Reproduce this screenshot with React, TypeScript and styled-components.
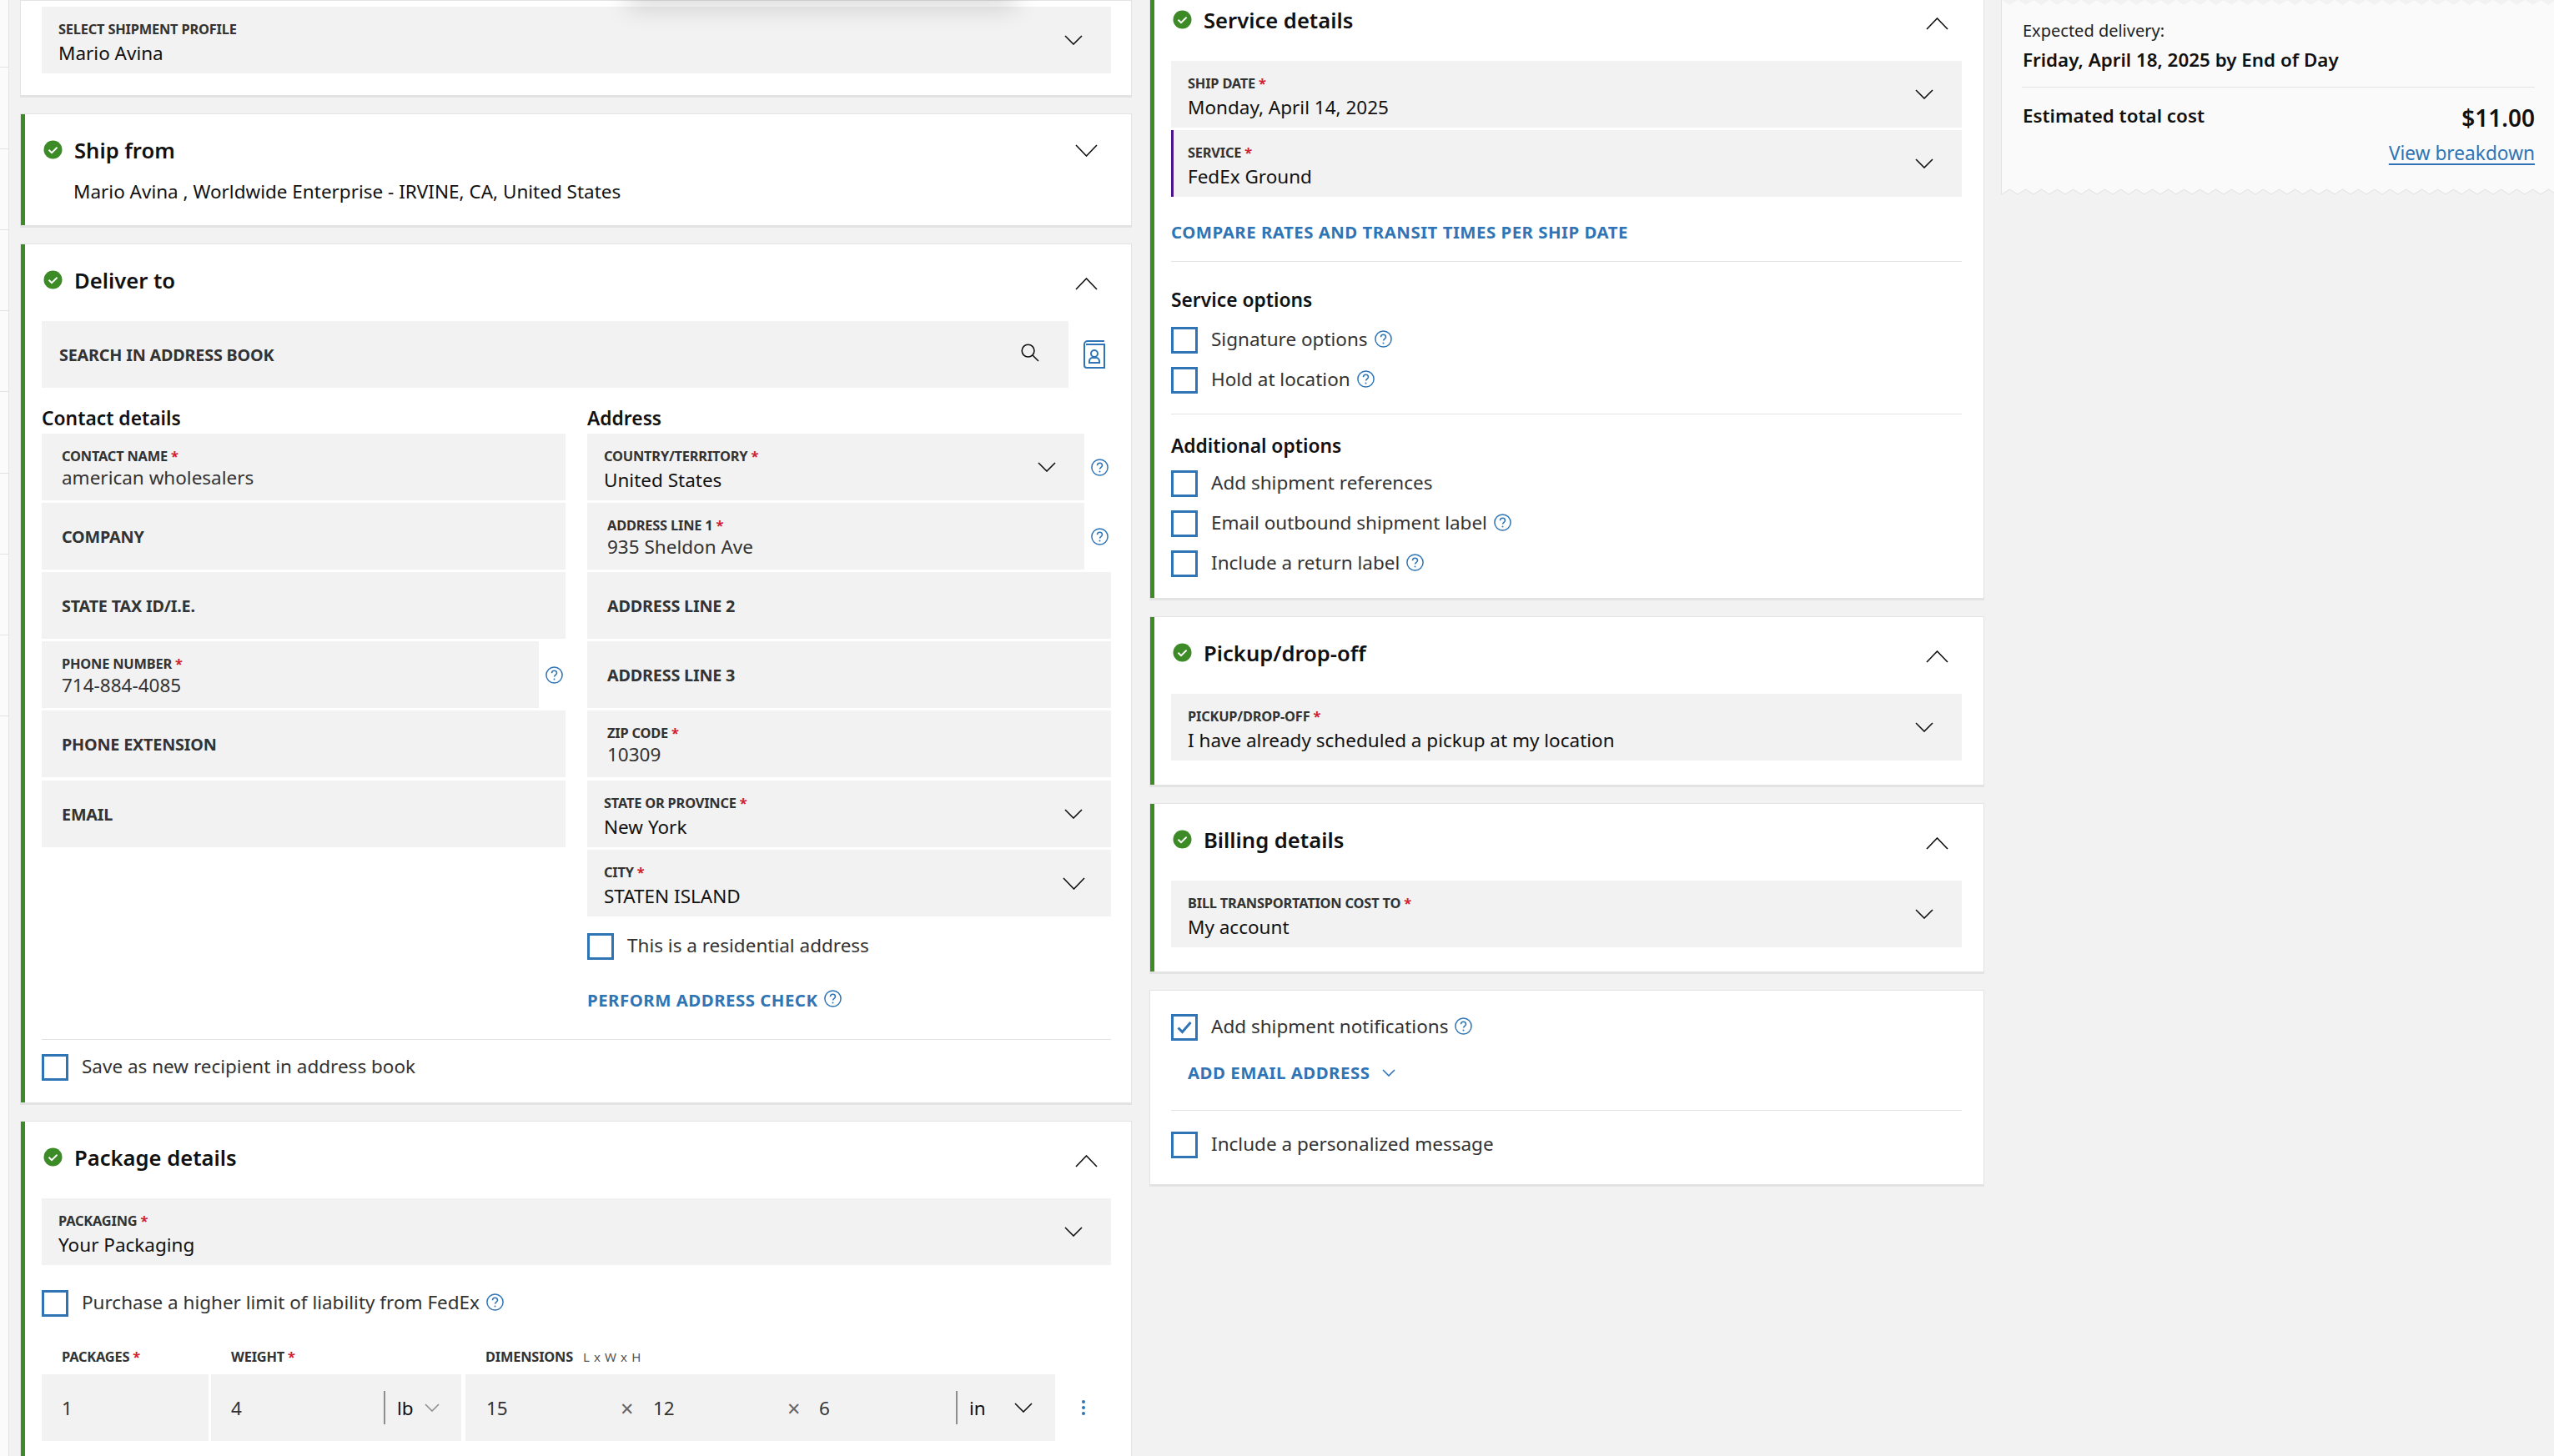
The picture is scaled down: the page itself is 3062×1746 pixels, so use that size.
import React from 'react';
import styled, { createGlobalStyle } from 'styled-components';

const GlobalStyle = createGlobalStyle`
  html, body {
    margin: 0;
    padding: 0;
    background: #f2f2f2;
  }
  * {
    box-sizing: border-box;
  }
`;

const BLUE = '#2f75b5';
const GREEN = '#3c8b27';
const FIELD = '#f2f2f2';
const LINE = '#e3e3e3';

const Page = styled.div`
  display: flex;
  position: relative;
  width: 3062px;
  height: 1746px;
  overflow: hidden;
  background: ${FIELD};
  font-family: 'Noto Sans', 'Open Sans', sans-serif;
  color: #333;
`;

const Sidebar = styled.div`
  flex: 0 0 11px;
  margin-right: 13px;
  margin-top: -16px;
  height: 1762px;
  background: #fbfbfb;
  border-right: 1px solid ${LINE};
`;

const SidebarRow = styled.div`
  height: 97.25px;
  border-bottom: 1px solid ${LINE};
`;

const Column = styled.div<{ $width: number; $top?: number; $gapRight?: number }>`
  flex: 0 0 ${(p) => p.$width}px;
  display: flex;
  flex-direction: column;
  gap: 19px;
  margin-top: ${(p) => p.$top ?? 0}px;
  margin-right: ${(p) => p.$gapRight ?? 0}px;
`;

const Card = styled.section<{ $done?: boolean; $pt?: number; $pb?: number; $pr?: number }>`
  background: #fff;
  border: 1px solid ${LINE};
  border-bottom-width: 3px;
  padding: ${(p) => p.$pt ?? 0}px ${(p) => p.$pr ?? 24}px ${(p) => p.$pb ?? 29}px 25px;
  box-shadow: ${(p) => (p.$done ? `inset 5px 0 0 ${GREEN}` : 'none')};
`;

const CardHeader = styled.header`
  display: flex;
  align-items: center;
  height: 40px;
  margin-top: 24px;
  margin-bottom: 28px;
`;

const TitleIcon = styled.svg`
  flex: none;
  width: 23px;
  height: 23px;
  margin-top: -4px;
  margin-right: 14px;
  margin-left: 2px;
`;

const Title = styled.h2`
  flex: 1;
  margin: 0;
  font-size: 25.6px;
  line-height: 40px;
  font-weight: 600;
  color: #111;
`;

const ToggleSlot = styled.div<{ $up?: boolean }>`
  display: flex;
  width: 27px;
  margin-right: 16px;
  margin-top: ${(p) => (p.$up ? 7 : -2)}px;
`;

const ChevronSvg = styled.svg<{ $up?: boolean }>`
  display: block;
  flex: none;
  transform: ${(p) => (p.$up ? 'rotate(180deg)' : 'none')};
`;

const Stack = styled.div<{ $offsetSix?: boolean }>`
  display: flex;
  flex-direction: column;
  gap: 3px;
  ${(p) => (p.$offsetSix ? '> :nth-child(6) { margin-top: 1px; }' : '')}
`;

const FieldBox = styled.div<{ $purple?: boolean; $pad?: number }>`
  flex: 1 0 auto;
  min-width: 0;
  height: 80px;
  display: flex;
  align-items: center;
  background: ${FIELD};
  padding: 0 ${(p) => p.$pad ?? 21}px;
  box-shadow: ${(p) => (p.$purple ? 'inset 3px 0 0 #4d148c' : 'none')};
`;

const FieldText = styled.div`
  flex: 1;
  min-width: 0;
  align-self: flex-start;
  padding-top: 17px;
`;

const FieldLabel = styled.div`
  font-size: 16.4px;
  line-height: 20px;
  font-weight: 700;
  color: #333;
  white-space: nowrap;
  letter-spacing: -0.2px;
`;

const Required = styled.span`
  color: #d0202e;
  margin-left: 4px;
`;

const FieldValue = styled.div<{ $select?: boolean }>`
  font-size: 22.5px;
  line-height: 30px;
  margin-top: ${(p) => (p.$select ? 4 : 1)}px;
  color: ${(p) => (p.$select ? '#111' : '#333')};
  white-space: nowrap;
`;

const EmptyLabel = styled.div`
  flex: 1;
  font-size: 19.8px;
  font-weight: 700;
  color: #333;
  letter-spacing: -0.2px;
`;

const ChevronSlot = styled.div<{ $right?: number }>`
  flex: none;
  margin-right: ${(p) => p.$right ?? 13}px;
`;

const HelpButton = styled.span`
  flex: none;
  display: inline-flex;
  color: ${BLUE};
`;

const FieldWithHelp = styled.div`
  display: flex;
  align-items: center;
  ${HelpButton} {
    margin-left: 8px;
    margin-right: 3px;
  }
`;

const SearchRow = styled.div`
  display: flex;
  align-items: center;
`;

const BookSlot = styled.div`
  flex: none;
  display: flex;
  width: 51px;
  justify-content: flex-end;
  padding-right: 7px;
`;

const Columns = styled.div`
  display: grid;
  grid-template-columns: 628px 628px;
  column-gap: 26px;
  margin-top: 21px;
`;

const SubHeading = styled.h3<{ $mt?: number; $mb?: number }>`
  margin: ${(p) => p.$mt ?? 0}px 0 ${(p) => p.$mb ?? 2}px;
  font-size: 22.8px;
  line-height: 32px;
  font-weight: 600;
  color: #111;
`;

const CheckRow = styled.label<{ $mt?: number }>`
  display: flex;
  align-items: center;
  height: 32px;
  margin-top: ${(p) => p.$mt ?? 0}px;
  font-size: 22.5px;
  color: #333;
`;

const CheckText = styled.span`
  margin-top: -3px;
`;

const CheckBox = styled.span`
  flex: none;
  display: flex;
  align-items: center;
  justify-content: center;
  width: 32px;
  height: 32px;
  margin-right: 16px;
  border: 3px solid ${BLUE};
  background: #fff;
`;

const InlineHelp = styled(HelpButton)`
  margin-left: 8px;
  margin-top: -4px;
`;

const LinkRow = styled.div<{ $mt?: number; $ml?: number }>`
  display: flex;
  align-items: center;
  height: 30px;
  margin-top: ${(p) => p.$mt ?? 0}px;
  margin-left: ${(p) => p.$ml ?? 0}px;
  color: ${BLUE};
`;

const LinkText = styled.a`
  font-size: 20.4px;
  font-weight: 700;
  color: ${BLUE};
  letter-spacing: 0.5px;
  text-decoration: none;
  white-space: nowrap;
`;

const LinkChevron = styled.span`
  display: inline-flex;
  margin-left: 15px;
`;

const Divider = styled.hr<{ $mt?: number }>`
  border: 0;
  height: 1px;
  margin: ${(p) => p.$mt ?? 0}px 0 0;
  background: ${LINE};
`;

const BodyText = styled.div`
  margin: -15px 0 0 38px;
  font-size: 22.5px;
  line-height: 32px;
  color: #111;
`;

const DimLabels = styled.div`
  display: flex;
  align-items: center;
  height: 30px;
  margin-top: 32px;
  margin-bottom: 7px;
`;

const DimLabel = styled.div<{ $w: number; $pl?: number }>`
  flex: 0 0 ${(p) => p.$w}px;
  padding-left: ${(p) => p.$pl ?? 0}px;
  font-size: 16.4px;
  font-weight: 700;
  color: #333;
  letter-spacing: -0.2px;
  white-space: nowrap;
`;

const DimHint = styled.span`
  margin-left: 12px;
  font-size: 15px;
  font-weight: 400;
  color: #555;
  letter-spacing: 0.6px;
`;

const MeasureRow = styled.div`
  display: flex;
  align-items: center;
`;

const MeasureCell = styled.div<{ $w: number; $ml?: number; $pl?: number; $pr?: number }>`
  flex: 0 0 ${(p) => p.$w}px;
  display: flex;
  align-items: center;
  height: 80px;
  margin-left: ${(p) => p.$ml ?? 0}px;
  padding-left: ${(p) => p.$pl ?? 24}px;
  padding-right: ${(p) => p.$pr ?? 0}px;
  background: ${FIELD};
  font-size: 22.5px;
  color: #333;
`;

const MeasureValue = styled.span<{ $w?: number }>`
  flex: ${(p) => (p.$w ? `0 0 ${p.$w}px` : '1')};
`;

const TimesMark = styled.span<{ $w: number }>`
  flex: 0 0 ${(p) => p.$w}px;
  font-size: 27px;
  line-height: 1;
  color: #666;
`;

const UnitSplit = styled.span`
  flex: none;
  width: 2px;
  height: 40px;
  margin-right: 14px;
  background: #8e8e8e;
`;

const UnitText = styled.span<{ $w: number }>`
  flex: 0 0 ${(p) => p.$w}px;
  color: #111;
`;

const Kebab = styled.div`
  flex: none;
  display: flex;
  flex-direction: column;
  gap: 3px;
  margin-left: 32px;
`;

const KebabDot = styled.span`
  width: 4px;
  height: 4px;
  border-radius: 50%;
  background: ${BLUE};
`;

const Summary = styled.aside`
  position: relative;
  flex: 1;
  height: 233px;
  padding: 24px 23px 0 25px;
  background: #fafafa;
  border-left: 1px solid ${LINE};
`;

const ZigZag = styled.svg<{ $bottom?: boolean }>`
  position: absolute;
  left: 0;
  display: block;
  width: 100%;
  height: 8px;
  ${(p) => (p.$bottom ? 'bottom: -1px;' : 'top: 0;')}
`;

const DeliveryLabel = styled.div`
  font-size: 20px;
  line-height: 26px;
  color: #222;
`;

const DeliveryDate = styled.div`
  margin-top: 6px;
  font-size: 22.4px;
  line-height: 32px;
  font-weight: 600;
  color: #111;
`;

const SummaryLine = styled.hr`
  border: 0;
  height: 1px;
  margin: 16px 0 0 -1px;
  background: ${LINE};
`;

const TotalRow = styled.div`
  display: flex;
  justify-content: space-between;
  align-items: flex-start;
  margin-top: 18px;
`;

const TotalLabel = styled.div`
  font-size: 22.4px;
  line-height: 32px;
  font-weight: 600;
  color: #111;
`;

const TotalPrice = styled.div`
  margin-top: -2px;
  margin-bottom: 2px;
  font-size: 28px;
  line-height: 40px;
  font-weight: 600;
  color: #111;
`;

const BreakdownRow = styled.div`
  display: flex;
  justify-content: flex-end;
  margin-top: 6px;
`;

const Breakdown = styled.a`
  font-size: 22.7px;
  line-height: 30px;
  color: ${BLUE};
  text-decoration: underline;
  text-underline-offset: 4px;
`;

const TopShadow = styled.div`
  position: absolute;
  top: -40px;
  left: 760px;
  width: 450px;
  height: 40px;
  box-shadow: 0 2px 30px 8px rgba(0, 0, 0, 0.14);
`;

const Chevron = ({
  w = 22,
  up,
  color = '#111',
}: {
  w?: number;
  up?: boolean;
  color?: string;
}) => {
  const h = Math.round(w * 0.55);
  return (
    <ChevronSvg $up={up} width={w} height={h} viewBox={`0 0 ${w} ${h}`} fill="none">
      <polyline
        points={`1,1 ${w / 2},${h - 1} ${w - 1},1`}
        stroke={color}
        strokeWidth="1.6"
      />
    </ChevronSvg>
  );
};

const Help = ({ size = 21 }: { size?: number }) => (
  <svg width={size} height={size} viewBox="0 0 21 21" fill="none" stroke="currentColor">
    <circle cx="10.5" cy="10.5" r="9.6" strokeWidth="1.5" />
    <path d="M7.5 8.2a3 3 0 0 1 6 0c0 2-3 2.2-3 4.4" strokeWidth="1.6" />
    <circle cx="10.5" cy="15.4" r="1" fill="currentColor" stroke="none" />
  </svg>
);

const Done = () => (
  <TitleIcon viewBox="0 0 23 23">
    <circle cx="11.5" cy="11.5" r="11" fill={GREEN} />
    <path d="M6.5 11.8l3.5 3.4 6.6-6.4" fill="none" stroke="#fff" strokeWidth="1.9" />
  </TitleIcon>
);

const SearchIcon = () => (
  <svg width="22" height="22" viewBox="0 0 22 22" fill="none" stroke="#111" strokeWidth="1.6">
    <circle cx="8.6" cy="8.6" r="7.4" />
    <path d="M14 14l7 7" />
  </svg>
);

const BookIcon = () => (
  <svg width="26" height="34" viewBox="0 0 26 34" fill="none" stroke={BLUE} strokeWidth="2">
    <path d="M25 1H5a4 4 0 0 0-4 4v25a3 3 0 0 0 3 3h21V5H3" />
    <circle cx="13" cy="16" r="4" />
    <path d="M7 27v-2a4 4 0 0 1 4-4h4a4 4 0 0 1 4 4v2z" />
  </svg>
);

const Tick = () => (
  <svg width="18" height="16" viewBox="0 0 18 16" fill="none" stroke={BLUE} strokeWidth="3">
    <path d="M1.5 8.5l5 5L16.5 2" />
  </svg>
);

const Edge = ({ id, bottom }: { id: string; bottom?: boolean }) => (
  <ZigZag $bottom={bottom}>
    <defs>
      <pattern id={id} patternUnits="userSpaceOnUse" width="19" height="8">
        {bottom ? (
          <>
            <path d="M0 7L9.5 1L19 7V8H0Z" fill="#f2f2f2" />
            <path d="M0 7L9.5 1L19 7" fill="none" stroke="#e0e0e0" />
          </>
        ) : (
          <path d="M0 0L9.5 6L19 0Z" fill="#f2f2f2" />
        )}
      </pattern>
    </defs>
    <rect width="100%" height="8" fill={`url(#${id})`} />
  </ZigZag>
);

const Label = ({ text, required = true }: { text: string; required?: boolean }) => (
  <FieldLabel>
    {text}
    {required && <Required>*</Required>}
  </FieldLabel>
);

const SelectField = ({
  label,
  value,
  required = true,
  purple,
  chevronW,
}: {
  label: string;
  value: string;
  required?: boolean;
  purple?: boolean;
  chevronW?: number;
}) => (
  <FieldBox $purple={purple} $pad={20}>
    <FieldText>
      <Label text={label} required={required} />
      <FieldValue $select>{value}</FieldValue>
    </FieldText>
    <ChevronSlot $right={chevronW ? 11 : 14}>
      <Chevron w={chevronW} />
    </ChevronSlot>
  </FieldBox>
);

const InputField = ({ label, value }: { label: string; value: string }) => (
  <FieldBox $pad={24}>
    <FieldText>
      <Label text={label} />
      <FieldValue>{value}</FieldValue>
    </FieldText>
  </FieldBox>
);

const EmptyField = ({ label }: { label: string }) => (
  <FieldBox $pad={24}>
    <EmptyLabel>{label}</EmptyLabel>
  </FieldBox>
);

const Check = ({
  label,
  help,
  checked,
  mt,
}: {
  label: string;
  help?: boolean;
  checked?: boolean;
  mt?: number;
}) => (
  <CheckRow $mt={mt}>
    <CheckBox>{checked && <Tick />}</CheckBox>
    <CheckText>{label}</CheckText>
    {help && (
      <InlineHelp>
        <Help />
      </InlineHelp>
    )}
  </CheckRow>
);

const SectionHeader = ({ title, open = true }: { title: string; open?: boolean }) => (
  <CardHeader>
    <Done />
    <Title>{title}</Title>
    <ToggleSlot $up={open}>
      <Chevron w={27} up={open} />
    </ToggleSlot>
  </CardHeader>
);

export default function App() {
  return (
    <Page>
      <GlobalStyle />
      <Sidebar>
        {Array.from({ length: 9 }, (_, i) => (
          <SidebarRow key={i} />
        ))}
      </Sidebar>

      <Column $width={1333} $gapRight={21}>
        <Card $pt={7} $pb={26}>
          <SelectField label="SELECT SHIPMENT PROFILE" value="Mario Avina" required={false} />
        </Card>

        <Card $done $pb={24}>
          <SectionHeader title="Ship from" open={false} />
          <BodyText>Mario Avina , Worldwide Enterprise - IRVINE, CA, United States</BodyText>
        </Card>

        <Card $done $pb={26}>
          <SectionHeader title="Deliver to" />
          <SearchRow>
            <FieldBox>
              <EmptyLabel>SEARCH IN ADDRESS BOOK</EmptyLabel>
              <ChevronSlot $right={14}>
                <SearchIcon />
              </ChevronSlot>
            </FieldBox>
            <BookSlot>
              <BookIcon />
            </BookSlot>
          </SearchRow>
          <Columns>
            <div>
              <SubHeading>Contact details</SubHeading>
              <Stack $offsetSix>
                <InputField label="CONTACT NAME" value="american wholesalers" />
                <EmptyField label="COMPANY" />
                <EmptyField label="STATE TAX ID/I.E." />
                <FieldWithHelp>
                  <InputField label="PHONE NUMBER" value="714-884-4085" />
                  <HelpButton>
                    <Help />
                  </HelpButton>
                </FieldWithHelp>
                <EmptyField label="PHONE EXTENSION" />
                <EmptyField label="EMAIL" />
              </Stack>
            </div>
            <div>
              <SubHeading>Address</SubHeading>
              <Stack $offsetSix>
                <FieldWithHelp>
                  <SelectField label="COUNTRY/TERRITORY" value="United States" />
                  <HelpButton>
                    <Help />
                  </HelpButton>
                </FieldWithHelp>
                <FieldWithHelp>
                  <InputField label="ADDRESS LINE 1" value="935 Sheldon Ave" />
                  <HelpButton>
                    <Help />
                  </HelpButton>
                </FieldWithHelp>
                <EmptyField label="ADDRESS LINE 2" />
                <EmptyField label="ADDRESS LINE 3" />
                <InputField label="ZIP CODE" value="10309" />
                <SelectField label="STATE OR PROVINCE" value="New York" />
                <SelectField label="CITY" value="STATEN ISLAND" chevronW={27} />
              </Stack>
              <Check label="This is a residential address" mt={20} />
              <LinkRow $mt={33}>
                <LinkText>PERFORM ADDRESS CHECK</LinkText>
                <InlineHelp>
                  <Help />
                </InlineHelp>
              </LinkRow>
            </div>
          </Columns>
          <Divider $mt={32} />
          <Check label="Save as new recipient in address book" mt={17} />
        </Card>

        <Card $done $pb={120}>
          <SectionHeader title="Package details" />
          <SelectField label="PACKAGING" value="Your Packaging" />
          <Check label="Purchase a higher limit of liability from FedEx" help mt={30} />
          <DimLabels>
            <DimLabel $w={203} $pl={24}>
              PACKAGES<Required>*</Required>
            </DimLabel>
            <DimLabel $w={305} $pl={24}>
              WEIGHT<Required>*</Required>
            </DimLabel>
            <DimLabel $w={400} $pl={24}>
              DIMENSIONS<DimHint>L x W x H</DimHint>
            </DimLabel>
          </DimLabels>
          <MeasureRow>
            <MeasureCell $w={200}>1</MeasureCell>
            <MeasureCell $w={300} $ml={3} $pr={26}>
              <MeasureValue>4</MeasureValue>
              <UnitSplit />
              <UnitText $w={33}>lb</UnitText>
              <Chevron w={18} color="#8e8e8e" />
            </MeasureCell>
            <MeasureCell $w={707} $ml={5} $pl={25}>
              <MeasureValue $w={161}>15</MeasureValue>
              <TimesMark $w={39}>×</TimesMark>
              <MeasureValue $w={161}>12</MeasureValue>
              <TimesMark $w={38}>×</TimesMark>
              <MeasureValue $w={164}>6</MeasureValue>
              <UnitSplit />
              <UnitText $w={54}>in</UnitText>
              <Chevron w={22} />
            </MeasureCell>
            <Kebab>
              <KebabDot />
              <KebabDot />
              <KebabDot />
            </Kebab>
          </MeasureRow>
        </Card>
      </Column>

      <Column $width={1001} $top={-20} $gapRight={20}>
        <Card $done $pb={25} $pr={26}>
          <SectionHeader title="Service details" />
          <Stack>
            <SelectField label="SHIP DATE" value="Monday, April 14, 2025" />
            <SelectField label="SERVICE" value="FedEx Ground" purple />
          </Stack>
          <LinkRow $mt={27}>
            <LinkText>COMPARE RATES AND TRANSIT TIMES PER SHIP DATE</LinkText>
          </LinkRow>
          <Divider $mt={20} />
          <SubHeading $mt={30} $mb={16}>
            Service options
          </SubHeading>
          <Check label="Signature options" help />
          <Check label="Hold at location" help mt={16} />
          <Divider $mt={24} />
          <SubHeading $mt={22} $mb={13}>
            Additional options
          </SubHeading>
          <Check label="Add shipment references" />
          <Check label="Email outbound shipment label" help mt={16} />
          <Check label="Include a return label" help mt={16} />
        </Card>

        <Card $done $pr={26}>
          <SectionHeader title="Pickup/drop-off" />
          <SelectField label="PICKUP/DROP-OFF" value="I have already scheduled a pickup at my location" />
        </Card>

        <Card $done $pr={26}>
          <SectionHeader title="Billing details" />
          <SelectField label="BILL TRANSPORTATION COST TO" value="My account" />
        </Card>

        <Card $pt={28} $pb={31} $pr={26}>
          <Check label="Add shipment notifications" help checked />
          <LinkRow $mt={23} $ml={20}>
            <LinkText>ADD EMAIL ADDRESS</LinkText>
            <LinkChevron>
              <Chevron w={16} color={BLUE} />
            </LinkChevron>
          </LinkRow>
          <Divider $mt={30} />
          <Check label="Include a personalized message" mt={25} />
        </Card>
      </Column>

      <Summary>
        <Edge id="summary-top" />
        <DeliveryLabel>Expected delivery:</DeliveryLabel>
        <DeliveryDate>Friday, April 18, 2025 by End of Day</DeliveryDate>
        <SummaryLine />
        <TotalRow>
          <TotalLabel>Estimated total cost</TotalLabel>
          <TotalPrice>$11.00</TotalPrice>
        </TotalRow>
        <BreakdownRow>
          <Breakdown>View breakdown</Breakdown>
        </BreakdownRow>
        <Edge id="summary-bottom" bottom />
      </Summary>

      <TopShadow />
    </Page>
  );
}
